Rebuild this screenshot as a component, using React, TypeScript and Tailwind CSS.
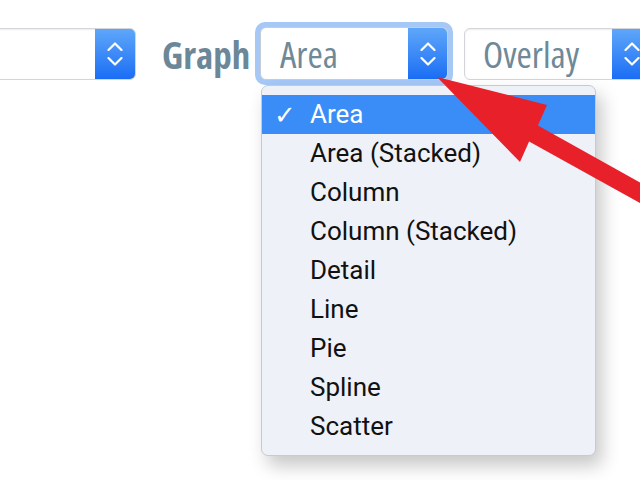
const options = [
  'Area',
  'Area (Stacked)',
  'Column',
  'Column (Stacked)',
  'Detail',
  'Line',
  'Pie',
  'Spline',
  'Scatter',
];

function Stepper({ className = '' }: { className?: string }) {
  return (
    <div
      className={`flex shrink-0 flex-col items-center justify-center gap-[6px] bg-gradient-to-b from-[#5ea6fa] to-[#1a6df4] ${className}`}
    >
      <svg width="16" height="9" viewBox="0 0 16 9" fill="none">
        <path d="M1.5 8 L8 1.5 L14.5 8" stroke="white" strokeWidth="2.2" strokeLinecap="round" strokeLinejoin="round" />
      </svg>
      <svg width="16" height="9" viewBox="0 0 16 9" fill="none">
        <path d="M1.5 1 L8 7.5 L14.5 1" stroke="white" strokeWidth="2.2" strokeLinecap="round" strokeLinejoin="round" />
      </svg>
    </div>
  );
}

export default function App() {
  return (
    <div className="relative h-[480px] w-[640px] overflow-hidden bg-white font-['Open_Sans',sans-serif]">
      {/* Toolbar */}
      <div className="flex items-center pt-[22px]">
        {/* cut-off select on the left */}
        <div className="ml-[-60px] flex h-[52px] w-[196px] shrink-0 overflow-hidden rounded-[6px] border border-[#d3d5d9] bg-white shadow-[inset_0_1px_2px_rgba(0,0,0,0.08)]">
          <div className="flex-1" />
          <Stepper className="w-[40px]" />
        </div>

        <span className="ml-[26px] w-[93px] shrink-0 pt-[1px] text-[37px] font-bold leading-none text-[#6c8797] [font-stretch:75%]">
          Graph
        </span>

        {/* focused select */}
        <div className="shrink-0 rounded-[10px] bg-[#a5c8f7] p-[5px]">
          <div className="flex h-[53px] w-[188px] overflow-hidden rounded-[6px] border border-[#c4cdd8] bg-white">
            <span className="flex flex-1 items-center pl-[19px] text-[37px] leading-none text-[#6f8998] [font-stretch:75%]">
              Area
            </span>
            <Stepper className="w-[39px]" />
          </div>
        </div>

        <div className="ml-[11px] flex h-[52px] w-[200px] shrink-0 overflow-hidden rounded-[6px] border border-[#d3d5d9] bg-white shadow-[inset_0_1px_2px_rgba(0,0,0,0.08)]">
          <span className="flex w-[147px] shrink-0 items-center pl-[18px] text-[37px] leading-none text-[#6f8998] [font-stretch:75%]">
            Overlay
          </span>
          <Stepper className="w-[40px]" />
        </div>
      </div>

      {/* Open menu */}
      <div className="absolute left-[261px] top-[85px] w-[335px] rounded-[7px] border border-[#c6cad2] bg-[#eef1f8] py-[9px] font-['Roboto',sans-serif] shadow-[6px_10px_18px_rgba(0,0,0,0.22)]">
        {options.map((opt, i) => (
          <div
            key={opt}
            className={`flex h-[39px] items-center text-[26px] ${
              i === 0 ? 'bg-[#3a8cf6] text-white' : 'text-[#111]'
            }`}
          >
            <span className="w-[48px] pl-[12px] font-['DejaVu_Sans',sans-serif] text-[26px] leading-none">
              {i === 0 ? '✓' : ''}
            </span>
            {opt}
          </div>
        ))}
      </div>

      {/* Red annotation arrow */}
      <svg className="pointer-events-none absolute left-0 top-0" width="640" height="480" viewBox="0 0 640 480">
        <polygon
          points="437,77 547,105 537.9,125.6 660,193.5 660,214 529.1,141.4 520,162"
          fill="#e8202a"
        />
      </svg>
    </div>
  );
}
